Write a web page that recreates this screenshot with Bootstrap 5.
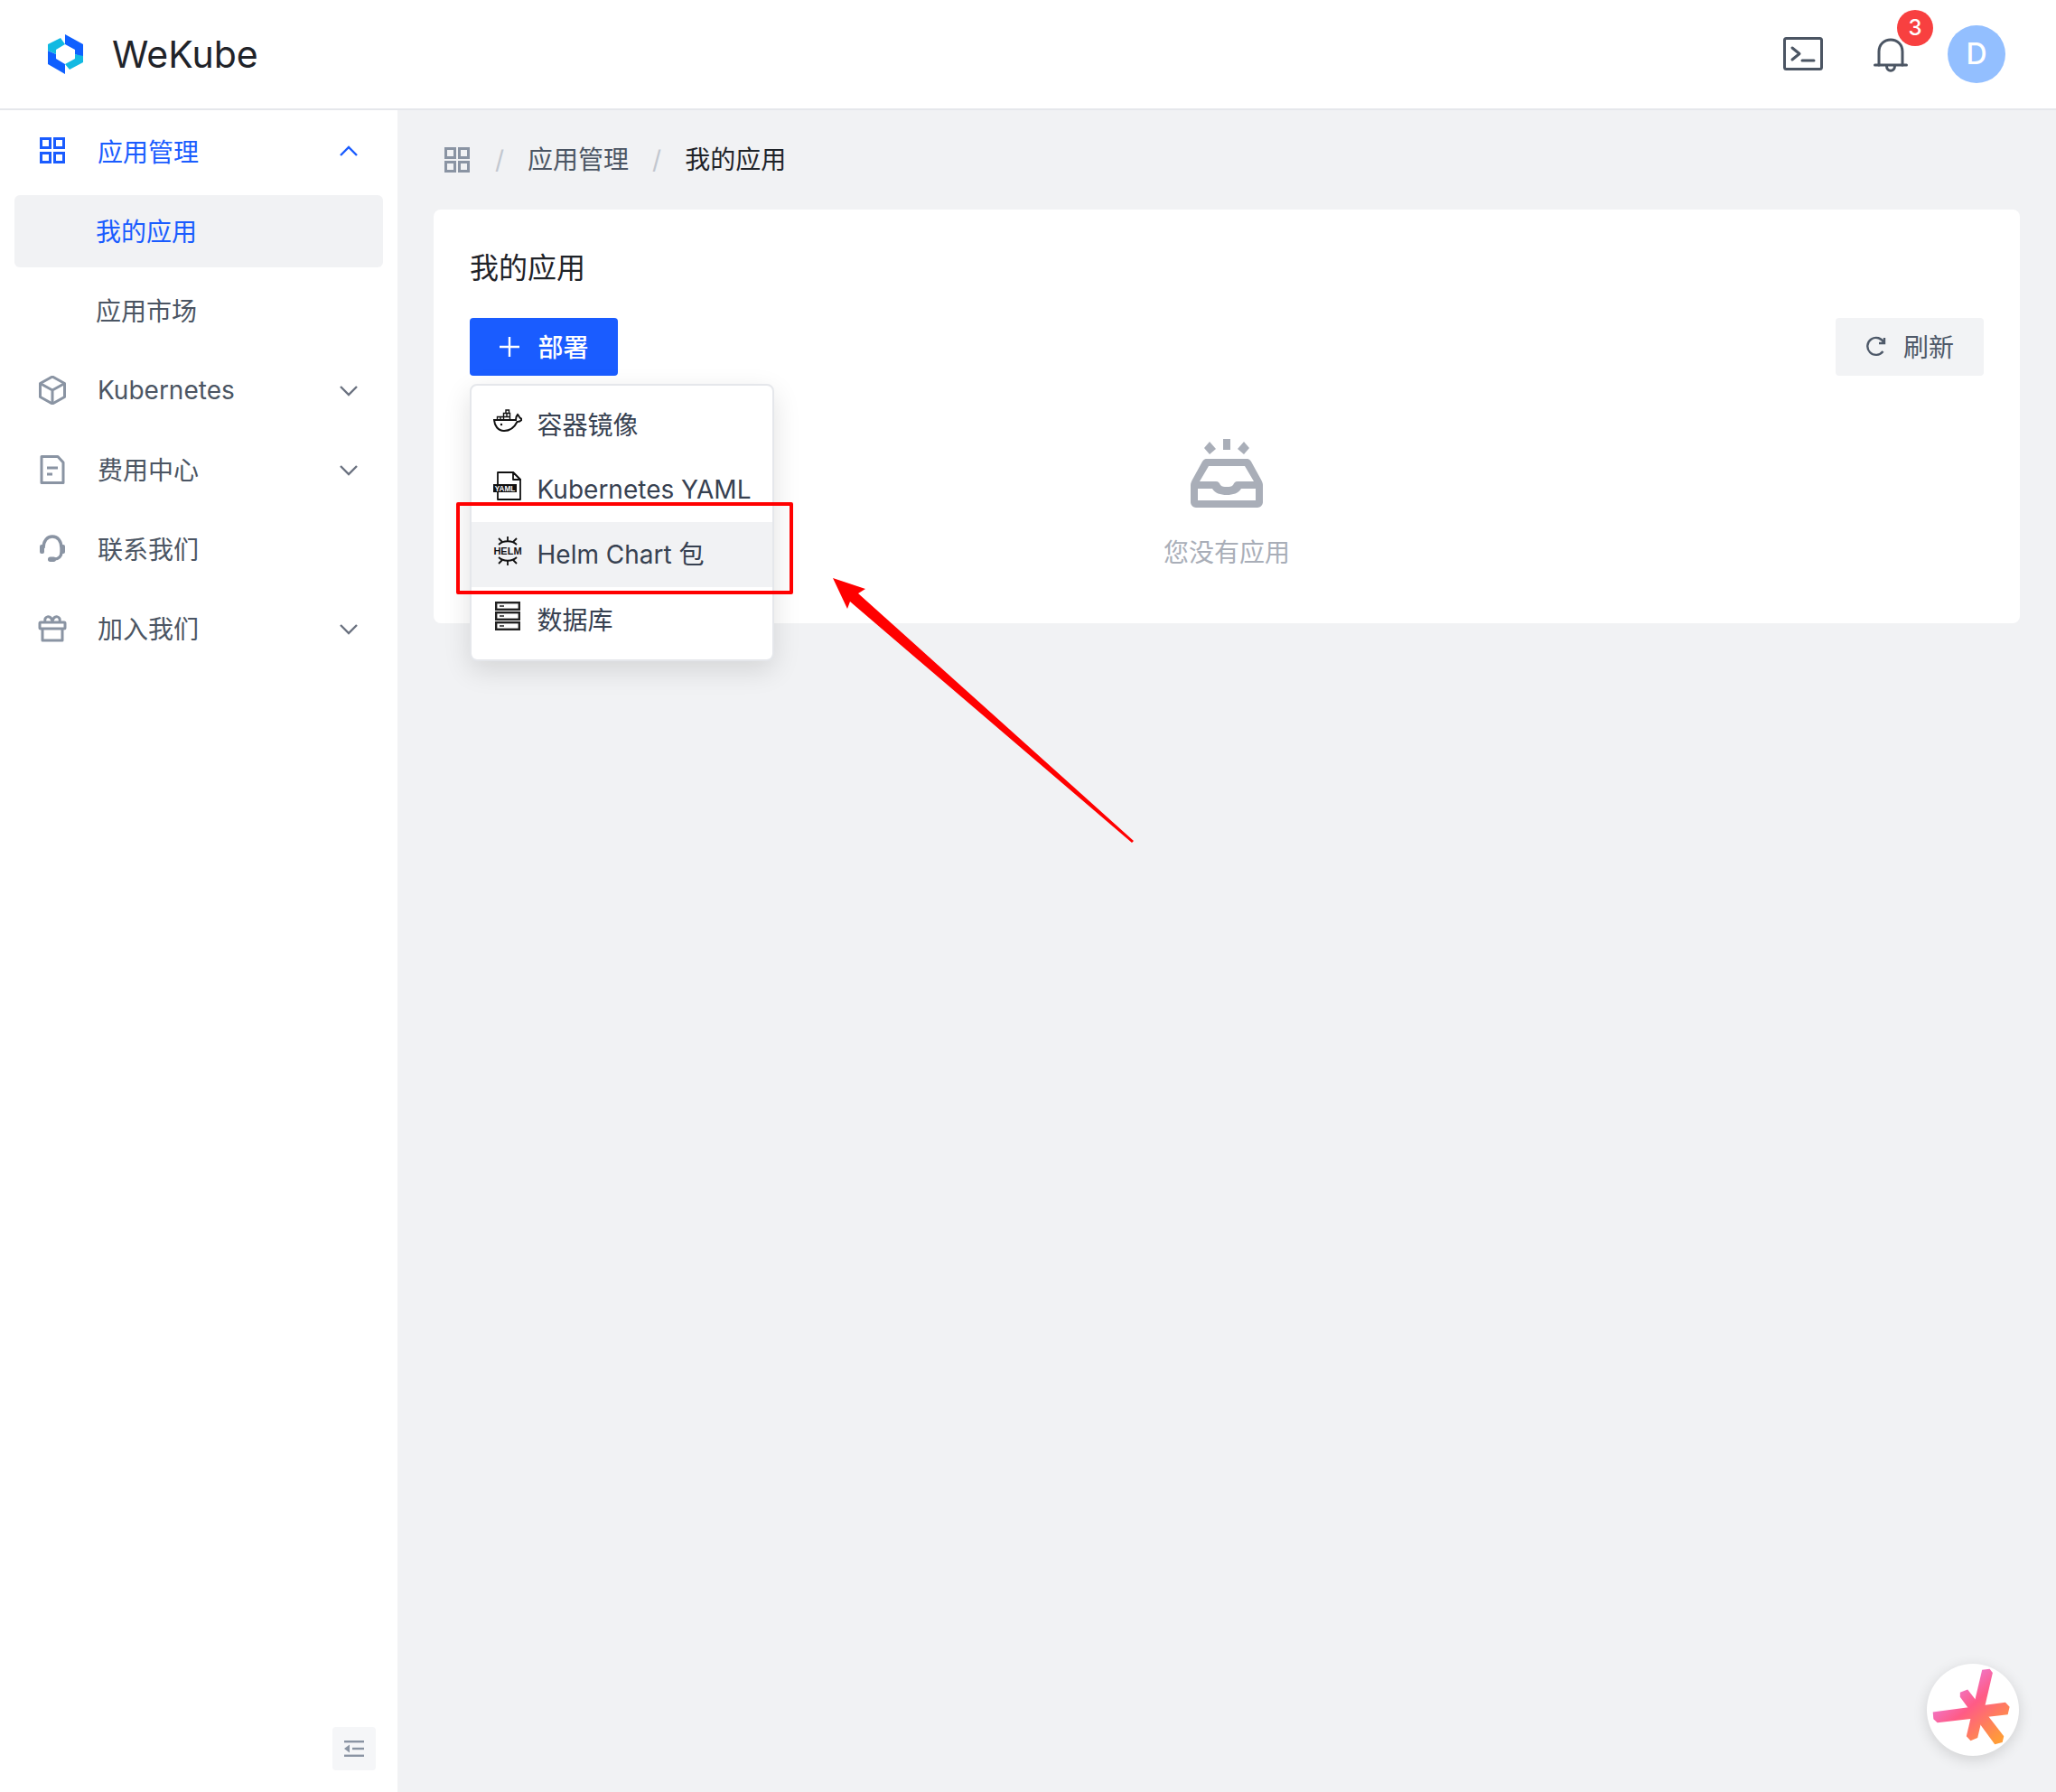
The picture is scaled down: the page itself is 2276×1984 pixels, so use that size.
<!DOCTYPE html>
<html lang="zh-CN">
<head>
  <meta charset="UTF-8">
  <meta name="viewport" content="width=device-width, initial-scale=1.0">
  <title>WeKube</title>
  <link href="https://cdn.jsdelivr.net/npm/bootstrap@5.3.1/dist/css/bootstrap.min.css" rel="stylesheet">
  <style>
    html, body { height: 100%; }
    body {
      font-family: Inter, "Noto Sans CJK SC", sans-serif;
      font-size: 28px;
      color: #4b5563;
      background: #f1f2f4;
      overflow: hidden;
    }
    .zh-text { padding-top: 2px; }
    .app-shell { position: relative; height: 1984px; }
    .top-bar {
      height: 122px;
      padding: 0 56px 0 53px;
      background: #fff;
      border-bottom: 2px solid #e5e7eb;
    }
    .brand-name { margin-left: 31px; font-size: 41px; line-height: 1; color: #1f2329; padding: 0; }
    .tool-term { margin-right: 56px; }
    .bell-wrap { position: relative; width: 38px; height: 38px; margin-right: 44px; margin-top: -6px; }
    .bell-count {
      position: absolute; left: 26px; top: -27px;
      width: 40px; height: 40px; padding: 0;
      border-radius: 50%;
      background: #f84040;
      color: #fff; font-size: 24px; font-weight: 500; line-height: 40px;
    }
    .user-dot {
      width: 64px; height: 64px; border-radius: 50%;
      background: #93bfff; color: #fff; font-size: 32px; font-weight: 500;
    }
    .side-col { width: 440px; height: 1862px; background: #fff; padding: 6px 16px 0; position: relative; }
    .side-link {
      height: 80px; margin-bottom: 8px; padding: 0 26px;
      color: #4b5563; border-radius: 6px; text-decoration: none;
    }
    .side-link .link-text { margin-left: 34px; flex: 1; }
    .side-link.on { color: #1a5cff; }
    .side-link.sub { padding-left: 90px; }
    .side-link.sub.on { background: #f1f2f4; }
    .fold-btn {
      position: absolute; left: 368px; top: 1790px;
      width: 48px; height: 48px; padding: 0; border: 0; border-radius: 4px; background: #f5f6f8;
    }
    .main-col { padding: 0 40px; min-width: 0; }
    .crumb-row { height: 110px; margin: 0; padding-left: 10px; }
    .crumb-list { margin: 0; --bs-breadcrumb-divider-color: #c2c7cf; --bs-breadcrumb-item-padding-x: 26px; }
    .crumb-list .breadcrumb-item { color: #4b5563; display: flex; align-items: center; }
    .crumb-list .breadcrumb-item.active { color: #1f2329; }
    .crumb-list .breadcrumb-item + .breadcrumb-item::before { color: #c2c7cf; }
    .app-panel { border: 0; border-radius: 8px; padding: 40px 40px 58px; }
    .panel-title { font-size: 32px; line-height: 48px; color: #1f2329; margin: 0 0 32px; font-weight: 400; padding-top: 1px; height: 48px; }
    .deploy-btn {
      width: 164px; height: 64px; padding: 0; gap: 19px;
      font-size: 28px; font-weight: 500; color: #fff; background: #1a5cff; border: 0; border-radius: 4px;
    }
    .refresh-btn {
      width: 164px; height: 64px; padding: 0; gap: 18px;
      font-size: 28px; color: #4e5969; background: #f2f3f5; border: 0; border-radius: 4px;
    }
    .deploy-menu {
      width: 337px; margin-top: 9px !important; padding: 7px 0 8px;
      border: 2px solid #e5e7eb; border-radius: 8px;
      box-shadow: 0 10px 30px rgba(0, 0, 0, .12);
      font-size: 28px;
    }
    .deploy-menu .dropdown-item {
      height: 72px; padding: 0 0 0 24px; gap: 16.5px; color: #374151; white-space: nowrap;
    }
    .deploy-menu .dropdown-item svg { margin-bottom: 8px; flex: none; }
    .deploy-menu .dropdown-item.hovered { background: #f1f2f4; }
    .empty-box { padding-top: 70px; }
    .empty-text { margin-top: 28px; line-height: 40px; color: #a9aeb8; padding-top: 2px; }
    .mark-box {
      position: absolute; left: 505px; top: 556px; width: 373px; height: 102px; z-index: 1010;
      border: 4.5px solid #ff0000; border-radius: 2px; pointer-events: none;
    }
    .mark-arrow { position: absolute; left: 900px; top: 620px; z-index: 1010; }
    .float-star {
      position: absolute; left: 2133px; top: 1842px;
      width: 102px; height: 102px; border-radius: 50%;
      background: #fff; box-shadow: 0 4px 16px rgba(0, 0, 0, .14);
    }
    .svg-label { font-family: "Liberation Sans", sans-serif; font-weight: 700; }
  </style>
</head>
<body>
  <div class="app-shell d-flex flex-column">
    <nav class="navbar top-bar flex-nowrap">
      <div class="d-flex align-items-center">
        <svg width="40" height="44" viewBox="0 0 40 44">
          <polygon fill="#0f5fff" points="19,0 39,11 39,26 30,22 30,17 19,11"/>
          <polygon fill="#0f5fff" points="19,44 0,33 0,18 9,22 9,27 19,33"/>
          <polygon fill="#12b9e2" points="0,11 14,4 19,11 9,17 9,22 0,18"/>
          <polygon fill="#12b9e2" points="39,24 39,31 24,39 19,33 30,27 30,22"/>
        </svg>
        <a class="navbar-brand brand-name" href="#">WeKube</a>
      </div>
      <div class="d-flex align-items-center">
        <svg class="tool-term" width="44" height="38" viewBox="0 0 44 38" fill="none" stroke="#4b5563" stroke-width="3" stroke-linecap="round" stroke-linejoin="round">
          <rect x="1.5" y="1.5" width="41" height="34" rx="2"/>
          <path d="M10 12l8 6.5-8 6.5M21 26h13"/>
        </svg>
        <div class="bell-wrap">
          <svg width="38" height="38" viewBox="0 0 38 38" fill="none" stroke="#4b5563" stroke-width="3" stroke-linecap="round" stroke-linejoin="round">
            <path d="M6 30V15C6 7 12 2 19 2s13 5 13 13v15"/>
            <path d="M1.5 30h35"/>
            <path d="M14.5 31c0 7 9 7 9 0"/>
          </svg>
          <span class="badge bell-count">3</span>
        </div>
        <div class="user-dot d-flex align-items-center justify-content-center">D</div>
      </div>
    </nav>

    <div class="d-flex flex-grow-1">
      <aside class="side-col flex-shrink-0">
        <nav class="nav flex-column">
          <a class="side-link on d-flex align-items-center" href="#">
            <svg width="32" height="32" viewBox="0 0 32 32" fill="none" stroke="#1a5cff" stroke-width="3">
              <rect x="3.5" y="1.5" width="10" height="10"/><rect x="18.5" y="1.5" width="10" height="10"/>
              <rect x="3.5" y="17.5" width="10" height="10"/><rect x="18.5" y="17.5" width="10" height="10"/>
            </svg>
            <span class="link-text zh-text">应用管理</span>
            <svg width="24" height="24" viewBox="0 0 24 24" fill="none" stroke="#1a5cff" stroke-width="2.4"><path d="M3 16l9-9 9 9"/></svg>
          </a>
          <a class="side-link sub on d-flex align-items-center" href="#"><span class="zh-text">我的应用</span></a>
          <a class="side-link sub d-flex align-items-center" href="#"><span class="zh-text">应用市场</span></a>
          <a class="side-link d-flex align-items-center" href="#">
            <svg width="32" height="32" viewBox="0 0 32 32" fill="none" stroke="#8a94a3" stroke-width="3" stroke-linejoin="round">
              <path d="M16 1l13.5 7.5v15L16 31 2.5 23.5v-15z"/><path d="M2.5 8.5L16 16l13.5-7.5M16 16v15"/>
            </svg>
            <span class="link-text">Kubernetes</span>
            <svg width="24" height="24" viewBox="0 0 24 24" fill="none" stroke="#6b7280" stroke-width="2.4"><path d="M3 8l9 9 9-9"/></svg>
          </a>
          <a class="side-link d-flex align-items-center" href="#">
            <svg width="32" height="32" viewBox="0 0 32 32" fill="none" stroke="#8a94a3" stroke-width="3" stroke-linejoin="round">
              <path d="M4 1.5h18L28 8v22.5H4z"/><path d="M10 14h12M10 21h6"/>
            </svg>
            <span class="link-text zh-text">费用中心</span>
            <svg width="24" height="24" viewBox="0 0 24 24" fill="none" stroke="#6b7280" stroke-width="2.4"><path d="M3 8l9 9 9-9"/></svg>
          </a>
          <a class="side-link d-flex align-items-center" href="#">
            <svg width="32" height="32" viewBox="0 0 32 32" fill="none" stroke="#8a94a3" stroke-width="3.4">
              <path d="M6 15C6 7 10 2 16 2s10 5 10 13v4c0 5-3 8-8 8"/>
              <rect x="2" y="11" width="5" height="10" rx="2" fill="#8a94a3" stroke="none"/>
              <rect x="25" y="11" width="5" height="10" rx="2" fill="#8a94a3" stroke="none"/>
              <rect x="11" y="24.5" width="9" height="5.5" rx="2.7" fill="#8a94a3" stroke="none"/>
            </svg>
            <span class="link-text zh-text">联系我们</span>
          </a>
          <a class="side-link d-flex align-items-center" href="#">
            <svg width="32" height="32" viewBox="0 0 32 32" fill="none" stroke="#8a94a3" stroke-width="3" stroke-linejoin="round">
              <rect x="2" y="9" width="28" height="7" rx="1"/><path d="M5 16v13h22V16"/>
              <path d="M8 9c-2-7 6-9 8-1 2-8 10-6 8 1"/>
            </svg>
            <span class="link-text zh-text">加入我们</span>
            <svg width="24" height="24" viewBox="0 0 24 24" fill="none" stroke="#6b7280" stroke-width="2.4"><path d="M3 8l9 9 9-9"/></svg>
          </a>
        </nav>
        <button class="fold-btn d-flex align-items-center justify-content-center" type="button" aria-label="收起">
          <svg width="22" height="18" viewBox="0 0 22 18" fill="#8a94a3">
            <rect x="0" y="0" width="22" height="2.4"/><rect x="0" y="15.6" width="22" height="2.4"/>
            <rect x="9" y="7.8" width="13" height="2.4"/><polygon points="0,9 6,4.5 6,13.5"/>
          </svg>
        </button>
      </aside>

      <main class="main-col flex-grow-1">
        <div class="crumb-row d-flex align-items-center">
          <ol class="breadcrumb crumb-list">
            <li class="breadcrumb-item">
              <svg width="32" height="32" viewBox="0 0 32 32" fill="none" stroke="#8a94a3" stroke-width="3">
                <rect x="3.5" y="3.5" width="10" height="10"/><rect x="18.5" y="3.5" width="10" height="10"/>
                <rect x="3.5" y="18.5" width="10" height="10"/><rect x="18.5" y="18.5" width="10" height="10"/>
              </svg>
            </li>
            <li class="breadcrumb-item">应用管理</li>
            <li class="breadcrumb-item active">我的应用</li>
          </ol>
        </div>

        <div class="card app-panel">
          <h5 class="panel-title">我的应用</h5>
          <div class="d-flex justify-content-between">
            <div class="dropdown">
              <button class="btn deploy-btn d-flex align-items-center justify-content-center" type="button">
                <svg width="24" height="24" viewBox="0 0 24 24" stroke="#fff" stroke-width="2.4"><path d="M12 1v22M1 12h22"/></svg>
                <span class="zh-text">部署</span>
              </button>
              <ul class="dropdown-menu deploy-menu show">
                <li><a class="dropdown-item d-flex align-items-center" href="#">
                  <svg width="32" height="32" viewBox="0 0 32 32" fill="none" stroke="#111" stroke-width="2">
                    <path d="M1 15h24c0-3 1-5 2-6 1 1 2 3 3 4l2 1c-2 3-4 3-5.5 3C23 24 17 27 12 27 5 27 1.5 21 1 15z"/>
                    <path stroke-width="1.4" d="M4.5 15v-3.5h14V15M8 15v-3.5M11.5 15V7.5h7v7.5M15 11.5V7.5M14 7.5V4h3.5v3.5"/>
                    <circle cx="9" cy="20" r="1.2" fill="#111" stroke="none"/>
                  </svg>
                  <span class="zh-text">容器镜像</span>
                </a></li>
                <li><a class="dropdown-item d-flex align-items-center" href="#">
                  <svg width="32" height="32" viewBox="0 0 32 32" fill="none">
                    <path d="M5 1h17l8 8v22H5z" stroke="#111" stroke-width="1.8" stroke-linejoin="round"/>
                    <path d="M22 1v8h8z" fill="#fff" stroke="#111" stroke-width="1.8" stroke-linejoin="round"/>
                    <rect x="0" y="14" width="26" height="9" fill="#111"/>
                    <text class="svg-label" x="13" y="21.6" text-anchor="middle" font-size="8.2" fill="#fff">YAML</text>
                  </svg>
                  <span>Kubernetes YAML</span>
                </a></li>
                <li><a class="dropdown-item hovered d-flex align-items-center" href="#">
                  <svg width="32" height="32" viewBox="0 0 32 32" fill="none" stroke="#111" stroke-width="1.8">
                    <path d="M6 9c5-5 15-5 20 0M6 23c5 5 15 5 20 0"/>
                    <path d="M16 0v5M6 2l4 4M26 2l-4 4M16 27v5M6 30l4-4M26 30l-4-4"/>
                    <text class="svg-label" x="16" y="20.2" text-anchor="middle" font-size="11" fill="#111" stroke="none">HELM</text>
                  </svg>
                  <span>Helm Chart 包</span>
                </a></li>
                <li><a class="dropdown-item d-flex align-items-center" href="#">
                  <svg width="32" height="32" viewBox="0 0 32 32" fill="none" stroke="#222" stroke-width="2.4">
                    <rect x="3.2" y="1.2" width="25.6" height="7.6"/><rect x="3.2" y="12.2" width="25.6" height="7.6"/><rect x="3.2" y="23.2" width="25.6" height="7.6"/>
                    <path stroke-width="1.6" d="M7 5h5M7 16h5M7 27h5"/>
                  </svg>
                  <span class="zh-text">数据库</span>
                </a></li>
              </ul>
            </div>
            <button class="btn refresh-btn d-flex align-items-center justify-content-center" type="button">
              <svg width="24" height="24" viewBox="0 0 24 24" fill="none" stroke="#4e5969" stroke-width="2.4">
                <path d="M19.5 17A9.5 9.5 0 1 1 20.5 7.5"/><path d="M21 2v6h-6"/>
              </svg>
              <span class="zh-text">刷新</span>
            </button>
          </div>
          <div class="empty-box d-flex flex-column align-items-center">
            <svg width="80" height="76" viewBox="0 0 80 76" fill="#a9aeb8">
              <rect x="36" y="0" width="8" height="12"/>
              <polygon points="21,3 28,11 21,17 15,10"/>
              <polygon points="59,3 65,10 59,17 52,11"/>
              <path fill-rule="evenodd" d="M18 22h44c2 0 4 1 5 3l11 20c1 2 2 4 2 6v19c0 3-3 6-6 6H6c-3 0-6-3-6-6V51c0-2 1-4 2-6l11-20c1-2 3-3 5-3zM20 30L10 47h18c3 0 4 2 5 4 2 2 4 2 7 2s5 0 7-2c1-2 2-4 5-4h18L60 30zM8 55v13h64V55H56c-3 5-9 7-16 7s-13-2-16-7z"/>
            </svg>
            <div class="empty-text">您没有应用</div>
          </div>
        </div>
      </main>
    </div>

    <div class="mark-box"></div>
    <svg class="mark-arrow" width="380" height="330" viewBox="900 620 380 330">
      <polygon fill="#ff0000" points="922,640 958,652 950,657 1255,931 1253,933 941,666 938,674"/>
    </svg>
    <div class="float-star">
      <svg width="102" height="102" viewBox="100 65 305 305">
        <defs>
          <linearGradient id="starFill" gradientUnits="userSpaceOnUse" x1="200" y1="90" x2="370" y2="290">
            <stop offset="0" stop-color="#e884ea"/>
            <stop offset=".45" stop-color="#ff5b86"/>
            <stop offset="1" stop-color="#ff9c38"/>
          </linearGradient>
        </defs>
        <g fill="url(#starFill)">
          <polygon points="120,225 360,193 374,208 368,233 135,260 122,248"/>
          <polygon points="283,85 308,82 318,95 268,310 245,320 231,305"/>
          <polygon points="210,160 235,150 355,305 350,325 325,332 210,175"/>
        </g>
      </svg>
    </div>
  </div>
  <script src="https://cdn.jsdelivr.net/npm/bootstrap@5.3.1/dist/js/bootstrap.bundle.min.js"></script>
</body>
</html>
